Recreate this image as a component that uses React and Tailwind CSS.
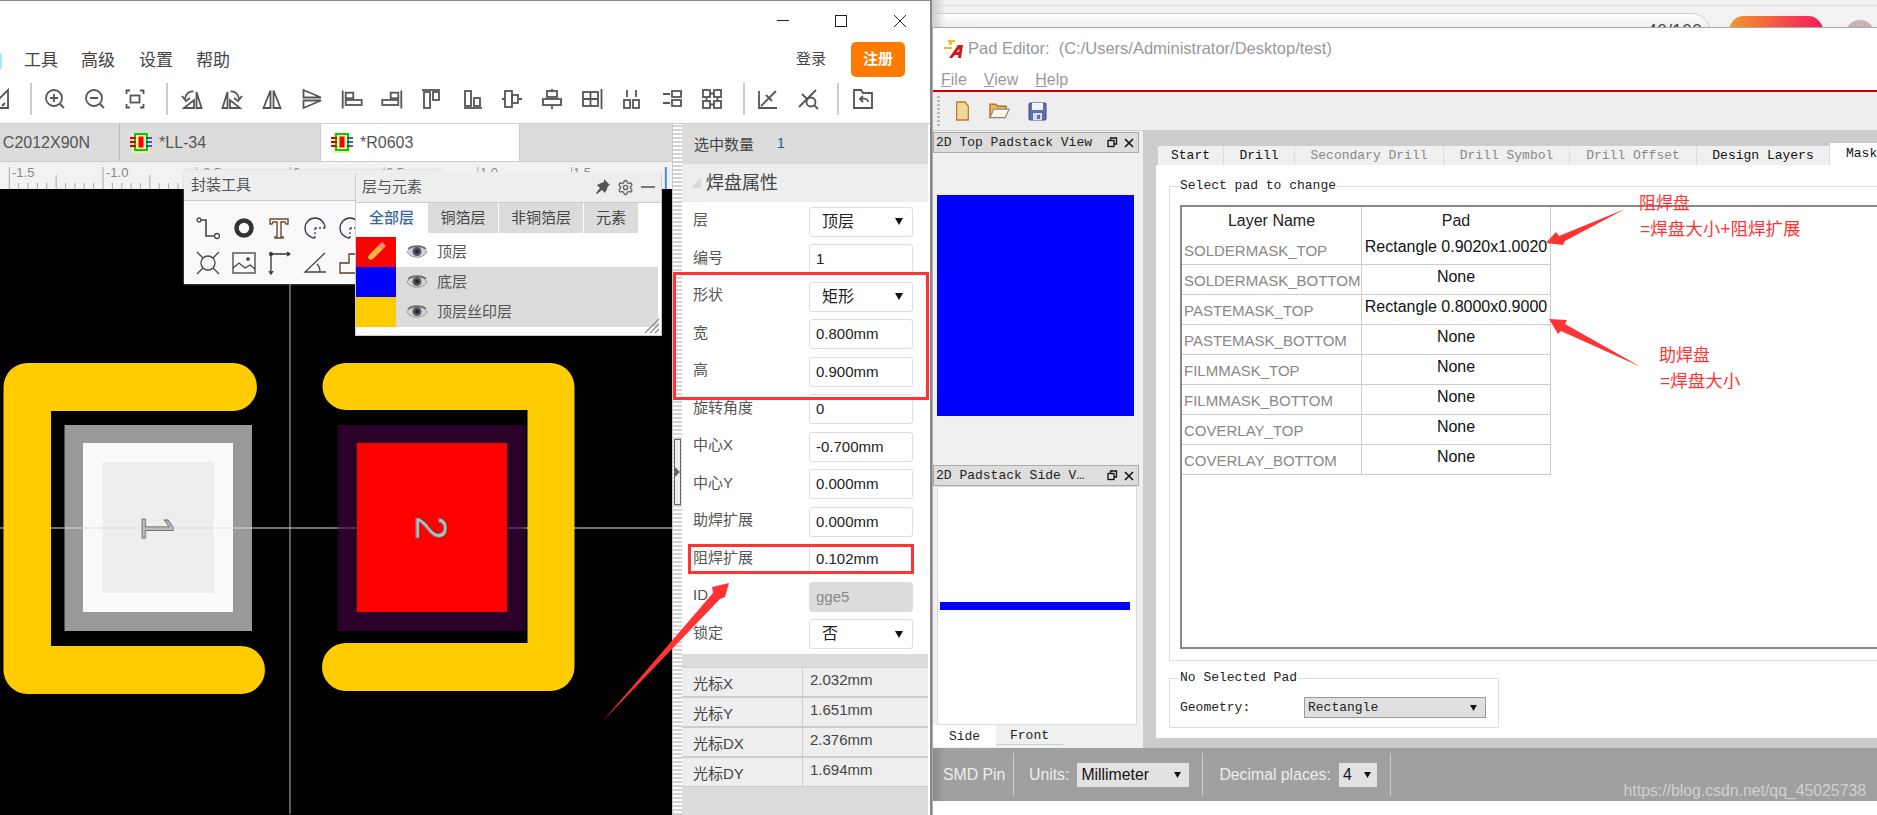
import { Settings } from 'lucide-react';

const S = ({ children, w = 22, className = '' }) => (
    <svg width={w} height={w} viewBox="0 0 22 22" fill="none" stroke="#555" strokeWidth="1.800" className={`shrink-0 ${className}`}>
        {children}
    </svg>
);

// toolbar icons, left to right
const zoomFit = (
    <>
        <path d="M6 2.500H2.500V6M16 2.500h3.500V6M6 19.500H2.500V16M16 19.500h3.500V16" />
        <rect x="6.500" y="7.500" width="9" height="7" />
    </>
);
const rotateLeft = (
    <>
        <path d="M15.500 4v16h5zM13 12v8H3z" />
        <path d="M12.500 3.500C8 3 4.500 6 4 11M1 8l4 5 4-3" />
    </>
);
const alignIcons = [
    rotateLeft,
    <g transform="matrix(-1 0 0 1 22 0)">{rotateLeft}</g>,
    <><path d="M9.500 2.500 2.500 20h7zM12.500 2.500l7 17.500h-7z" /></>,
    <><path d="M2.500 2v7.500H20zM2.500 20v-7.500H20z" /></>,
    <><path d="M1.700 2.500v18" /><rect x="4.700" y="4.700" width="7.600" height="5.600" /><rect x="4.700" y="12" width="16" height="5" /></>,
    <><path d="M20.300 2.500v18" /><rect x="9.700" y="4.700" width="7.600" height="5.600" /><rect x="1.300" y="12" width="16" height="5" /></>,
    <><path d="M1 2h18" /><rect x="3" y="4" width="6" height="16" /><rect x="12" y="4" width="6" height="8" /></>,
    <><path d="M3 20h18" /><rect x="4" y="3" width="6" height="15" /><rect x="13" y="10" width="6" height="8" /></>,
    <><path d="M1 11h3M18 11h3" /><rect x="4" y="3" width="7" height="16" /><rect x="11" y="7" width="6" height="8" /></>,
    <><path d="M11 1v3M11 18v3" /><rect x="6" y="3" width="10" height="6" /><rect x="2" y="11" width="18" height="6" /></>,
    <><path d="M20.500 1v20" /><rect x="2" y="4" width="15" height="14" /><path d="M9.500 4v14M2 11h15" /></>,
    <><path d="M6 2v7M15 2v7" /><rect x="3" y="12" width="6" height="8" /><rect x="12" y="12" width="6" height="8" /></>,
    <><path d="M2 6h7M2 15h7" /><rect x="11" y="3" width="9" height="6" /><rect x="11" y="12" width="9" height="6" /></>,
    <><rect x="2" y="2" width="7" height="7" /><rect x="13" y="2" width="7" height="7" /><rect x="2" y="13" width="7" height="7" /><rect x="13" y="13" width="7" height="7" /><path d="M9 5.500h4M9 16.500h4M5.500 9v4M16.500 9v4" /></>,
];

const ToolCell = ({ children }) => <div className="w-[40px] flex justify-center">{children}</div>;
const ToolSep = ({ className = '' }) => <div className={`w-[2px] h-[32px] bg-[#ccc] ${className}`} />;

// the little footprint glyph on the document tabs
const ChipIcon = () => (
    <svg width="22" height="22" viewBox="0 0 22 22" className="shrink-0">
        <rect x="2" y="1" width="18" height="20" fill="#f2f2b0" />
        <rect x="4" y="1" width="14" height="18" fill="#00d000" />
        <rect x="6" y="3" width="10" height="14" fill="#f2f2b0" />
        <rect x="8.500" y="4.500" width="5" height="11" fill="#ff0000" />
        <path d="M0 6h6M0 10h6M0 14h6" stroke="#e00000" strokeWidth="2" />
        <path d="M16 6h6M16 10h6M16 14h6" stroke="#2020d0" strokeWidth="1.500" />
    </svg>
);

const Ruler = () => {
    const ticks = [];
    for (let i = 0; i < 72; i++) {
        const x = 9.3 + i * 9.37;
        const h = i % 10 === 0 ? 22 : i % 5 === 0 ? 14 : 6;
        ticks.push(<path key={i} d={`M${x} 27V${27 - h}`} stroke="#aaa" strokeWidth="1" />);
    }
    return (
        <svg width="672" height="27" className="block bg-[#f2f2f2]">
            {ticks}
            <text x="12" y="15" fontSize="13" fill="#888">-1.5</text>
            <text x="106" y="15" fontSize="13" fill="#888">-1.0</text>
            <text x="199" y="15" fontSize="13" fill="#888">-0.5</text>
            <text x="293" y="15" fontSize="13" fill="#888">0</text>
            <text x="386" y="15" fontSize="13" fill="#888">0.5</text>
            <text x="480" y="15" fontSize="13" fill="#888">1.0</text>
            <text x="573" y="15" fontSize="13" fill="#888">1.5</text>
            <path d="M666 5V27" stroke="#2a7fe0" strokeWidth="1.500" />
        </svg>
    );
};

// footprint drawing on the black canvas, in page coordinates
const Board = () => (
    <svg className="absolute inset-0" width="672" height="625" viewBox="0 190 672 625">
        <rect x="64.500" y="426" width="187.500" height="206" fill="#999" />
        <rect x="83" y="444" width="150" height="169" fill="#fafafa" />
        <rect x="102.500" y="463" width="111.500" height="131" fill="#eee" />
        <rect x="338" y="426" width="187.500" height="206" fill="#2a002a" />
        <path d="M0 529H672" stroke="#ddd" strokeWidth="1" />
        <path d="M290 190V815" stroke="#bbb" strokeWidth="1" />
        <rect x="338" y="528" width="19" height="2" fill="#2a002a" opacity="0.6" />
        <rect x="507" y="528" width="18.500" height="2" fill="#2a002a" opacity="0.6" />
        <rect x="357" y="444" width="150" height="169" fill="#ff0000" />
        <path d="M233 364H28a24 24 0 0 0-24.500 24V670a24 24 0 0 0 24.500 25H241a24 24 0 0 0 0-48H51V412H233a24 24 0 0 0 0-48z" fill="#ffcc00" />
        <path d="M346 364H550a24 24 0 0 1 24.500 24V668a24 24 0 0 1-24.500 24H346a24 24 0 0 1 0-48H527.500V411H346a23.500 23.500 0 0 1 0-47z" fill="#ffcc00" />
        <text x="157" y="529" transform="rotate(90 157 529)" textAnchor="middle" dominantBaseline="central" fontSize="44" fill="#bdbdbd" stroke="#666" strokeWidth="0.800">1</text>
        <text x="431" y="529" transform="rotate(90 431 529)" textAnchor="middle" dominantBaseline="central" fontSize="44" fill="#bdbdbd" stroke="#666" strokeWidth="0.800">2</text>
    </svg>
);

const ToolIcon = ({ children }) => (
    <svg width="24" height="24" viewBox="0 0 24 24" fill="none" stroke="#444" strokeWidth="1.300" className="shrink-0">
        {children}
    </svg>
);

const PackagePanel = () => (
    <div className="absolute left-[184px] top-[46px] w-[259px] h-[114px] bg-[#f9f9f9] rounded-t-[4px] shadow-[0_0_2px_#bbb] overflow-hidden">
        <div className="h-[31px] bg-[#eee] border-b border-[#ccc] px-[7px] flex items-center text-[15px] text-[#555]">封装工具</div>
        <div className="flex flex-col gap-[11px] pt-[15px] pl-[12px]">
            <div className="flex gap-[11.500px]">
                <ToolIcon><circle cx="3" cy="4" r="2" /><circle cx="21" cy="20" r="2.500" /><path d="M5 4h5v16h9" strokeWidth="1.600" /></ToolIcon>
                <ToolIcon><circle cx="12" cy="12" r="7.500" stroke="#333" strokeWidth="4.500" /></ToolIcon>
                <ToolIcon><path d="M3 3h18v5h-2l-1-2h-4v15h2v1H8v-1h2V6H6L5 8H3z" strokeWidth="1.400" stroke="#6b4a30" /></ToolIcon>
                <ToolIcon><path d="M22 12A10 10 0 1 0 12 22" stroke="#335" /><path d="M12 12v10M12 12h10" strokeDasharray="2 2" /></ToolIcon>
                <ToolIcon><path d="M22 12A10 10 0 1 0 12 22" stroke="#335" /><path d="M12 12v10M12 12h10" strokeDasharray="2 2" /></ToolIcon>
            </div>
            <div className="flex gap-[11.500px]">
                <ToolIcon><circle cx="12" cy="12" r="7" /><path d="M1 1l6 6M23 1l-6 6M1 23l6-6M23 23l-6-6" /></ToolIcon>
                <ToolIcon><rect x="1" y="2" width="22" height="20" /><path d="M1 17l6-5 6 5 5-3 5 4" /><circle cx="16" cy="8" r="1.200" fill="#444" /></ToolIcon>
                <ToolIcon><path d="M4 23V3h18M20 1l3 2-3 2M2 20l2 3 2-3" stroke="#333" /><circle cx="4" cy="3" r="1.500" fill="#333" /></ToolIcon>
                <ToolIcon><path d="M22 2 2 21h21M14 13c2 2 3 5 3 8" /></ToolIcon>
                <ToolIcon><path d="M2 22V12h9V3h12v19z" stroke="#5a3a2a" /></ToolIcon>
            </div>
        </div>
    </div>
);

const Eye = () => (
    <svg width="22" height="14" viewBox="0 0 22 14" className="shrink-0">
        <path d="M1 7c4-7 16-7 20 0-4 7-16 7-20 0z" fill="#d4d4d4" stroke="#999" strokeWidth="1" />
        <circle cx="11" cy="6.500" r="4.500" fill="#555566" />
        <circle cx="11" cy="6.500" r="2" fill="#222" />
        <path d="M2 4c4-4 14-4 18 0" stroke="#666" strokeWidth="1.500" fill="none" />
    </svg>
);

const layers = [
    { name: '顶层', color: 'bg-[#ff0000]', rowBg: 'bg-white', pencil: true },
    { name: '底层', color: 'bg-[#0000ff]', rowBg: 'bg-[#dcdcdc]' },
    { name: '顶层丝印层', color: 'bg-[#ffcc00]', rowBg: 'bg-[#dcdcdc]' },
];

const layerTabs = [
    { label: '铜箔层', w: 'w-[71px]' },
    { label: '非铜箔层', w: 'w-[85px]' },
    { label: '元素', w: 'w-[55px]' },
];

const LayerPanel = () => (
    <div className="absolute left-[355px] top-[48px] w-[307px] h-[164px] bg-white rounded-t-[4px] border-x border-b border-[#ccc] flex flex-col">
        <div className="h-[30px] bg-[#eee] flex items-center px-[6px] text-[15px] text-[#555]">
            <span className="flex-1">层与元素</span>
            <svg width="16" height="16" viewBox="0 0 16 16" fill="#555" className="mr-[7px]">
                <path d="M10 0l6 6-2 1-1 3-2 4-3-3-5 4-1-1 4-5-3-3 4-2 3-1z" />
            </svg>
            <Settings size={17} strokeWidth={2} color="#666" className="mr-[7px]" />
            <div className="w-[14px] h-[2px] bg-[#777]" />
        </div>
        <div className="h-[31px] flex text-[15px] text-[#444] border-t border-[#ccc]">
            <div className="w-[71px] flex items-center justify-center text-[#36679f] font-medium">全部层</div>
            {layerTabs.map((t) => (
                <div key={t.label} className={`${t.w} bg-[#dcdcdc] border-l border-white flex items-center justify-center`}>
                    {t.label}
                </div>
            ))}
        </div>
        <div className="pt-[4px]">
            {layers.map((l) => (
                <div key={l.name} className="h-[30px] flex">
                    <div className={`w-[40px] flex items-center justify-center ${l.color}`}>
                        {l.pencil && (
                            <svg width="22" height="22" viewBox="0 0 22 22">
                                <path d="M2 20l2-6L14 4l4 4L8 18z" fill="#f5b83a" />
                                <path d="M14 4l3-3 4 4-3 3z" fill="#e88a8a" />
                                <path d="M2 20l1-3 2 2z" fill="#333" />
                            </svg>
                        )}
                    </div>
                    <div className={`w-[262px] flex items-center gap-[9px] pl-[10px] text-[15px] text-[#555] ${l.rowBg}`}>
                        <Eye />
                        <span>{l.name}</span>
                    </div>
                </div>
            ))}
        </div>
        <svg width="16" height="16" viewBox="0 0 16 16" stroke="#888" strokeWidth="1.200" className="absolute right-[1px] bottom-[1px]">
            <path d="M1 15 15 1M6 15 15 6M11 15l4-4" />
        </svg>
    </div>
);

const CaretDown = ({ small }) => (
    <svg width={small ? 7 : 8} height={small ? 6 : 7} viewBox="0 0 8 7" className="shrink-0"><path d="M0 0h8L4 7z" fill="#111" /></svg>
);

const Field = ({ value, select, disabled }) => (
    <div className={`w-[104px] h-[30px] rounded-[3px] flex items-center border border-[#ddd] ${select ? 'pl-[12px] pr-[9px] justify-between text-[16px]' : 'pl-[6px] text-[15px]'} ${disabled ? 'bg-[#dcdcdc] text-[#888]' : 'bg-white text-[#222]'}`}>
        <span>{value}</span>
        {select && <CaretDown />}
    </div>
);

const props = [
    { label: '层', value: '顶层', select: true },
    { label: '编号', value: '1' },
    { label: '形状', value: '矩形', select: true },
    { label: '宽', value: '0.800mm' },
    { label: '高', value: '0.900mm' },
    { label: '旋转角度', value: '0' },
    { label: '中心X', value: '-0.700mm' },
    { label: '中心Y', value: '0.000mm' },
    { label: '助焊扩展', value: '0.000mm' },
    { label: '阻焊扩展', value: '0.102mm' },
    { label: 'ID', value: 'gge5', disabled: true },
    { label: '锁定', value: '否', select: true },
];

const cursorRows = [
    ['光标X', '2.032mm'],
    ['光标Y', '1.651mm'],
    ['光标DX', '2.376mm'],
    ['光标DY', '1.694mm'],
];

const PropertyPanel = () => (
    <div className="w-[260px] flex">
        <div className="w-[10px] relative bg-[repeating-linear-gradient(0deg,#d4d4d4_0_2px,#fff_2px_4px)] border-l border-[#ccc]">
            <div className="absolute left-[1px] top-[315px] w-[7px] h-[66px] bg-[#eee] border border-[#666] flex items-center">
                <svg width="5" height="10" viewBox="0 0 5 10"><path d="M0 0l5 5-5 5z" fill="#666" /></svg>
            </div>
        </div>
        <div className="w-[246px] flex flex-col bg-[#dcdcdc]">
            <div className="h-[40px] flex items-center pl-[12px] pt-[2px] text-[15px] text-[#444]">
                <span className="w-[83px]">选中数量</span>
                <span className="text-[14px] text-[#36507a] mb-[4px]">1</span>
            </div>
            <div className="h-[38px] bg-[#eee] flex items-center pl-[9px] gap-[5px] text-[18px] text-[#444]">
                <svg width="10" height="10" viewBox="0 0 10 10"><path d="M10 0v10H0z" fill="#d8d8d8" /></svg>
                <span>焊盘属性</span>
            </div>
            <div className="bg-white pt-[1px] pb-[1px]">
                {props.map((p) => (
                    <div key={p.label} className="h-[37.500px] flex items-center pl-[11px]">
                        <span className="w-[116px] text-[15px] text-[#555] mb-[3px]">{p.label}</span>
                        <Field {...p} />
                    </div>
                ))}
            </div>
            <div className="h-[13px]" />
            <div className="bg-[#eee]">
                {cursorRows.map(([label, value]) => (
                    <div key={label} className="h-[30px] flex border-y-[0.5px] border-[#ccc] text-[15px] text-[#444]">
                        <span className="w-[121px] pl-[11px] pt-[5px] border-r border-[#ccc]">{label}</span>
                        <span className="pl-[7px] pt-[1px]">{value}</span>
                    </div>
                ))}
            </div>
        </div>
    </div>
);

const DockTitle = ({ children }) => (
    <div className="w-[206px] h-[21px] bg-[#ddd] border border-[#aaa] flex items-center pl-[2px] font-['Liberation_Mono',monospace] text-[13px] text-[#222] whitespace-nowrap">
        <span className="flex-1 overflow-hidden">{children}</span>
        <svg width="11" height="11" viewBox="0 0 11 11" fill="none" stroke="#111" strokeWidth="1.300" className="mr-[6px]">
            <rect x="1" y="3.500" width="6" height="6" /><path d="M3.500 3.500V1h6v6H7" />
        </svg>
        <svg width="10" height="10" viewBox="0 0 10 10" stroke="#111" strokeWidth="1.600" className="mr-[4px]">
            <path d="M1 1l8 8M9 1 1 9" />
        </svg>
    </div>
);

const padRows = [
    ['SOLDERMASK_TOP', 'Rectangle 0.9020x1.0020'],
    ['SOLDERMASK_BOTTOM', 'None'],
    ['PASTEMASK_TOP', 'Rectangle 0.8000x0.9000'],
    ['PASTEMASK_BOTTOM', 'None'],
    ['FILMMASK_TOP', 'None'],
    ['FILMMASK_BOTTOM', 'None'],
    ['COVERLAY_TOP', 'None'],
    ['COVERLAY_BOTTOM', 'None'],
];

const padTabs = [
    { label: 'Start', w: 'w-[66px]', on: true },
    { label: 'Drill', w: 'w-[71px]', on: true },
    { label: 'Secondary Drill', w: 'w-[149px]' },
    { label: 'Drill Symbol', w: 'w-[126px]' },
    { label: 'Drill Offset', w: 'w-[127px]' },
    { label: 'Design Layers', w: 'w-[133px]', on: true },
];

const PadEditor = () => (
    <div className="flex-1 flex flex-col bg-white border-t border-l border-[#aaa] overflow-hidden min-w-0">
        {/* Title */}
        <div className="h-[41px] shrink-0 flex items-center pl-[10px] text-[16.500px] text-[#999] whitespace-nowrap">
            <svg width="22" height="22" viewBox="0 0 22 22" className="mr-[3px]">
                <path d="M5 2h7v2H9v3H6V4H5zM1 9h8v2H1z" fill="#f0c020" />
                <path d="M6 20 15 7h5l-2 13h-3l.5-3H12l-3 3zM13.500 14h2.500l.5-3z" fill="#d01818" />
            </svg>
            <span className="mr-[9px]">Pad Editor:</span>
            <span>(C:/Users/Administrator/Desktop/test)</span>
        </div>
        {/* Menu */}
        <div className="h-[21px] shrink-0 flex items-center gap-[17px] pl-[8px] text-[16px] text-[#999]">
            <span><span className="underline">F</span>ile</span>
            <span><span className="underline">V</span>iew</span>
            <span><span className="underline">H</span>elp</span>
        </div>
        <div className="h-[2px] shrink-0 bg-[#cc0000]" />
        {/* Toolbar */}
        <div className="h-[39px] shrink-0 bg-[#eee] border-b border-[#ccc] flex items-center gap-[18.500px] pl-[4px]">
            <div className="w-[3px] h-[30px] bg-[repeating-linear-gradient(0deg,#bbb_0_2px,#eee_2px_4px)] -mr-[3.500px]" />
            <svg width="15" height="20" viewBox="0 0 18 20" preserveAspectRatio="none"><path d="M2 1h10l4 4v14H2z" fill="#f0d896" stroke="#c07830" strokeWidth="1.500" /></svg>
            <svg width="21" height="20" viewBox="0 0 22 20"><path d="M1 17V3h6l2 2h9v4" fill="#f0b860" stroke="#b87020" strokeWidth="1.500" /><path d="M1 17 5 8h16l-4 9z" fill="#fbf6ea" stroke="#888" strokeWidth="1.200" /></svg>
            <svg width="19" height="20" viewBox="0 0 19 20"><rect x="1" y="2" width="17" height="17" rx="1" fill="#5a72b0" stroke="#3a4a80" /><rect x="4" y="2" width="11" height="7" fill="#f2f2f8" /><rect x="5" y="12" width="9" height="7" fill="#d8dcee" /><rect x="9" y="14" width="3" height="4" fill="#5a72b0" /></svg>
        </div>
        {/* Work area */}
        <div className="flex-1 flex min-h-0 bg-[#ccc]">
            <div className="w-[210px] shrink-0 bg-[#f0f0f0] flex flex-col">
                <div className="mt-[1px]"><DockTitle>2D Top Padstack View</DockTitle></div>
                <div className="h-[312px] pt-[42px] pl-[4px]">
                    <div className="w-[197px] h-[221px] bg-[#0000ff]" />
                </div>
                <DockTitle>2D Padstack Side V…</DockTitle>
                <div className="ml-[4px] w-[200px] h-[239px] bg-white border border-[#ddd] pt-[115px] pl-[2px]">
                    <div className="w-[190px] h-[8px] bg-[#0000ff]" />
                </div>
                <div className="flex font-['Liberation_Mono',monospace] text-[13px] text-[#222]">
                    <div className="w-[63px] h-[22px] pt-[2px] bg-white flex items-center justify-center">Side</div>
                    <div className="w-[67px] h-[20px] pt-[2px] border-b border-[#ccc] flex items-center justify-center">Front</div>
                </div>
            </div>
            <div className="flex-1 pt-[15px] pl-[13px] min-w-0 flex flex-col pb-[10px]">
                <div className="flex h-[19px] items-end font-['Liberation_Mono',monospace] text-[13px] pl-[2px]">
                    {padTabs.map((t) => (
                        <div key={t.label} className={`${t.w} h-[19px] bg-[#f0f0f0] border-r border-[#ddd] flex items-center justify-center shrink-0 ${t.on ? 'text-[#111]' : 'text-[#888]'}`}>
                            {t.label}
                        </div>
                    ))}
                    <div className="w-[60px] h-[22px] bg-white pl-[16px] pt-[1px] shrink-0 text-[#111]">Mask</div>
                </div>
                <div className="flex-1 bg-white pl-[13px] pt-[13px] font-['Liberation_Mono',monospace] text-[13px] text-[#222]">
                    <fieldset className="border border-[#ddd] border-r-0 h-[483px] pl-[10px] pr-0 pb-0">
                        <legend className="px-[1px] ml-[-1px] leading-[16px]">Select pad to change</legend>
                        <div className="border-2 border-[#888] border-r-0 h-[444px] mt-[11px] font-['Liberation_Sans',sans-serif] text-[15px]">
                            <div className="w-[369px] h-[28px] flex text-[#222]">
                                <div className="w-[180px] border-r border-[#ccc] flex items-center justify-center text-[16px]">Layer Name</div>
                                <div className="w-[189px] border-r border-[#ccc] flex items-center justify-center text-[16px]">Pad</div>
                            </div>
                            {padRows.map(([name, pad]) => (
                                <div key={name} className="w-[369px] h-[30px] flex border-b border-[#ccc]">
                                    <div className="w-[180px] border-r border-[#ccc] flex items-center pl-[2px] pt-[3px] text-[#888] whitespace-nowrap">{name}</div>
                                    <div className="w-[189px] border-r border-[#ccc] flex items-center justify-center pb-[6px] text-[#111] whitespace-nowrap text-[16px]">{pad}</div>
                                </div>
                            ))}
                        </div>
                    </fieldset>
                    <fieldset className="mt-[10px] w-[330px] h-[57px] border border-[#ddd] pl-[10px]">
                        <legend className="px-[1px] ml-[-1px] leading-[14px]">No Selected Pad</legend>
                        <div className="flex items-center mt-[12px]">
                            <span className="w-[124px]">Geometry:</span>
                            <div className="w-[182px] h-[21px] bg-[#e0e0e0] border border-[#999] flex items-center justify-between pl-[3px] pr-[8px]">
                                <span>Rectangle</span>
                                <CaretDown small />
                            </div>
                        </div>
                    </fieldset>
                </div>
            </div>
        </div>
        {/* Status bar */}
        <div className="h-[53px] shrink-0 flex items-center text-[15.800px] text-[#eee] whitespace-nowrap bg-[linear-gradient(90deg,#8c8c8c,#a0a0a0_12px)] relative">
            <span className="pl-[10px] w-[80px]">SMD Pin</span>
            <div className="w-px h-[43px] bg-[#ccc]" />
            <span className="ml-[15px] mr-[8px]">Units:</span>
            <div className="w-[112px] h-[24px] bg-[#e2e2e2] text-[#111] flex items-center justify-between pl-[4px] pr-[8px]">
                <span>Millimeter</span>
                <CaretDown small />
            </div>
            <div className="w-px h-[43px] bg-[#ccc] ml-[13px]" />
            <span className="ml-[16px] mr-[8px]">Decimal places:</span>
            <div className="w-[38px] h-[24px] bg-[#e2e2e2] text-[#112] flex items-center justify-between pl-[4px] pr-[6px]">
                <span>4</span>
                <CaretDown small />
            </div>
            <div className="w-px h-[43px] bg-[#ccc] ml-[13px]" />
            <span className="absolute right-[11px] -bottom-[2px] text-[15.800px] text-[#d0d0d0]">https://blog.csdn.net/qq_45025738</span>
        </div>
        <div className="h-[14px] shrink-0 bg-white" />
    </div>
);

export default function App() {
    return (
        <div className="relative w-[1877px] h-[815px] overflow-hidden bg-white flex font-['Liberation_Sans','Noto_Sans_CJK_SC',sans-serif]">
            {/* Left window: footprint editor */}
            <div className="w-[932px] shrink-0 flex flex-col bg-white border-t border-r-2 border-[#888]">
                <div className="h-[39px] shrink-0 flex items-center justify-end">
                    <div className="w-[12px] h-[1px] bg-[#222] mr-[46px]" />
                    <div className="w-[12px] h-[12px] border border-[#222] mr-[47px]" />
                    <svg width="12" height="12" viewBox="0 0 12 12" stroke="#222" strokeWidth="1" className="mr-[24px]">
                        <path d="M0 0l12 12M12 0 0 12" />
                    </svg>
                </div>
                <div className="h-[38px] shrink-0 flex items-center text-[17px] text-[#444]">
                    <div className="w-[2px] h-[16px] mt-[3px] bg-[#a8e4fa]" />
                    <span className="ml-[22px] mr-[23px] mt-[3px]">工具</span>
                    <span className="mr-[24px] mt-[3px]">高级</span>
                    <span className="mr-[23px] mt-[3px]">设置</span>
                    <span className="mt-[3px]">帮助</span>
                    <span className="ml-auto mr-[25px] text-[15px]">登录</span>
                    <div className="w-[54px] h-[35px] mr-[25px] rounded-[5px] bg-[#ff7b00] text-white text-[15px] font-bold flex items-center justify-center">注册</div>
                </div>
                <div className="h-[46px] shrink-0 flex items-center border-b border-[#ccc] pb-[4px]">
                    <div className="w-[30px] shrink-0 overflow-hidden">
                        <S className="-ml-[12px]"><path d="M2 20 20 20 20 2zM8 18l3-3M14 18l3-3" /></S>
                    </div>
                    <ToolSep className="mr-[3px]" />
                    <ToolCell><S><circle cx="10" cy="10" r="8" /><path d="M16 16l4 4M6 10h8M10 6v8" /></S></ToolCell>
                    <ToolCell><S><circle cx="10" cy="10" r="8" /><path d="M16 16l4 4M6 10h8" /></S></ToolCell>
                    <ToolCell><S>{zoomFit}</S></ToolCell>
                    <ToolSep className="ml-[11px] mr-[4px]" />
                    {alignIcons.map((icon, i) => (
                        <ToolCell key={i}><S>{icon}</S></ToolCell>
                    ))}
                    <ToolSep className="ml-[11px] mr-[3px]" />
                    <ToolCell><S><path d="M2 3v17h18M4 18 19 3M9 7l6 6" /></S></ToolCell>
                    <ToolCell><S><path d="M2 19 19 2M5 6l6 6" /><circle cx="14" cy="14" r="4.500" /><path d="M17 17l4 4" /></S></ToolCell>
                    <ToolSep className="ml-[9px] mr-[4px]" />
                    <ToolCell><S><path d="M2 20V2h7l2 3h9v15z" /><path d="M16 14c0-3-3-4-7-3M11 8l-3 3 3 3" /></S></ToolCell>
                </div>
                <div className="flex-1 flex relative min-h-0">
                    <div className="w-[672px] flex flex-col">
                        <div className="h-[38px] flex bg-[#dcdcdc] border-b border-[#ccc] text-[16px] text-[#555]">
                            <div className="w-[120px] border-r border-[#bbb] flex items-center justify-end overflow-hidden whitespace-nowrap">
                                <span className="mr-[29px]">C2012X90N</span>
                            </div>
                            <div className="w-[200px] flex items-center pl-[10px] gap-[7px]">
                                <ChipIcon />
                                <span>*LL-34</span>
                            </div>
                            <div className="w-[200px] bg-white border-x border-[#ccc] flex items-center pl-[10px] gap-[7px]">
                                <ChipIcon />
                                <span>*R0603</span>
                            </div>
                        </div>
                        <Ruler />
                        <div className="flex-1 relative bg-black overflow-hidden">
                            <Board />
                        </div>
                    </div>
                    <PropertyPanel />
                    <PackagePanel />
                    <LayerPanel />
                </div>
            </div>

            {/* Right side: browser strip behind, Pad Editor in front */}
            <div className="flex-1 flex flex-col min-w-0">
                <div className="h-[27px] shrink-0 bg-[#f2f2f2] overflow-hidden relative">
                    <div className="h-[6px] border-b border-[#ddd]" />
                    <div className="absolute -left-[30px] top-[13px] w-[809px] h-[40px] bg-[linear-gradient(180deg,#fff,#eee_15px)] border border-[#ccc] rounded-[20px] text-[18px] leading-[18px] text-[#444] text-right pr-[8px] pt-[8px]">40/100</div>
                    <div className="absolute left-[797px] top-[16px] w-[94px] h-[30px] rounded-[15px] bg-[linear-gradient(90deg,#f09a2a,#f5195f)]" />
                    <div className="absolute left-[913px] top-[20px] w-[30px] h-[30px] rounded-full bg-[#c9b5b5]" />
                    <div className="absolute left-0 inset-y-0 w-[14px] bg-[linear-gradient(90deg,#ccc,#ccc0)]" />
                </div>
                <PadEditor />
            </div>

            {/* Red annotations drawn over both windows */}
            <div className="absolute left-[673px] top-[272px] w-[256px] h-[128px] border-[3px] border-[#f33] pointer-events-none" />
            <div className="absolute left-[688px] top-[544px] w-[226px] h-[30px] border-[3px] border-[#f33] pointer-events-none" />
            <svg className="absolute inset-0 pointer-events-none" width="1877" height="815" fill="#f33">
                <polygon points="729,583 725,597 720,599 602,722 713,593 712,587" />
                <polygon points="1546,243 1563,245 1565,241 1625,209 1559,236 1556,232" />
                <polygon points="1549,319 1567,320 1565,324 1641,367 1561,331 1558,334" />
            </svg>
            <div className="absolute left-[1639px] top-[194px] text-[17px] leading-[20px] text-[#f33]">阻焊盘</div>
            <div className="absolute left-[1640px] top-[219px] text-[17.500px] leading-[20px] text-[#f33]">=焊盘大小+阻焊扩展</div>
            <div className="absolute left-[1659px] top-[346px] text-[17px] leading-[20px] text-[#f33]">助焊盘</div>
            <div className="absolute left-[1660px] top-[371px] text-[17.500px] leading-[20px] text-[#f33]">=焊盘大小</div>
        </div>
    );
}
